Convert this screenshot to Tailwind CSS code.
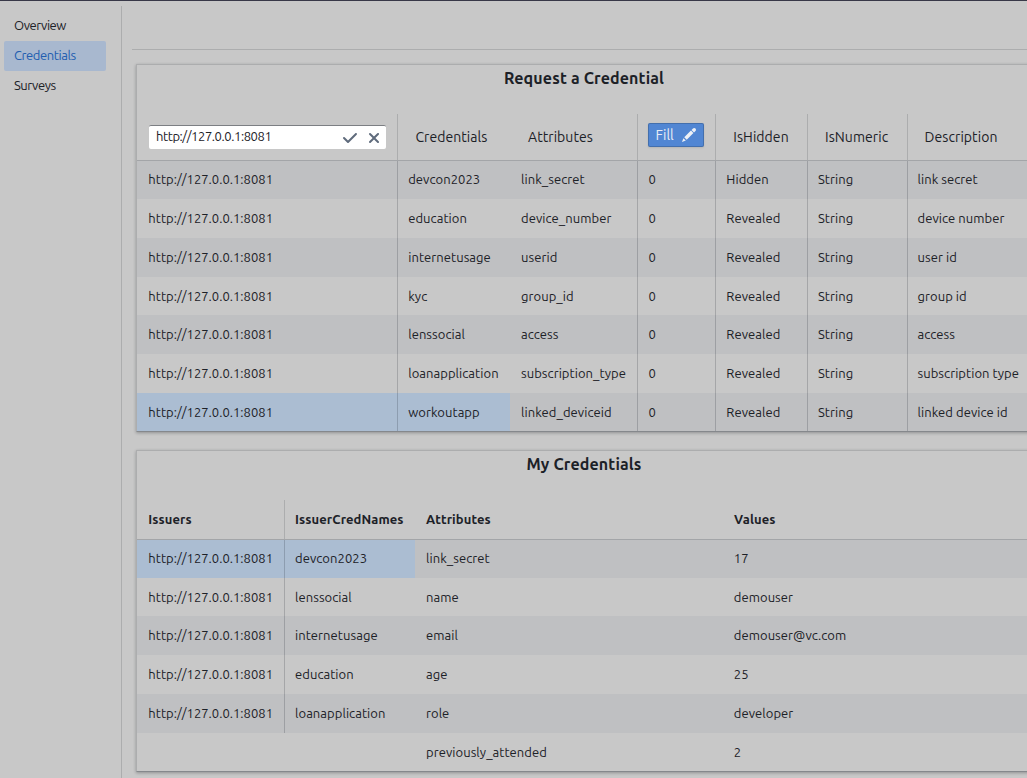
<!DOCTYPE html>
<html lang="en">
<head>
<meta charset="utf-8">
<title>Credentials</title>
<script src="https://cdn.jsdelivr.net/npm/@tailwindcss/browser@4"></script>
</head>
<body class="h-[778px] w-[1027px] overflow-hidden bg-[#c8c8c8] font-['Ubuntu','Noto_Sans',sans-serif] text-[13px] text-[#1c2127]">
<div class="flex h-full flex-col border-t border-[#383848]">
  <div class="flex min-h-0 flex-1">
    <nav class="flex w-[121px] shrink-0 flex-col pl-1 pt-[10px] tracking-[-0.45px]">
      <a class="flex h-[30px] w-[102px] items-center rounded-[2px] pl-[10px]"><span>Overview</span></a>
      <a class="flex h-[30px] w-[102px] items-center rounded-[2px] bg-[#a8b8cf] pl-[10px] tracking-[-0.4px] text-[#215db0]"><span>Credentials</span></a>
      <a class="flex h-[30px] w-[102px] items-center rounded-[2px] pl-[10px]"><span>Surveys</span></a>
    </nav>
    <main class="mt-[5px] w-[920px] shrink-0 border-l border-[#acadae] pl-[10px]">
      <div class="h-[44px] border-b border-[#acadae]"></div>
      <section class="ml-1 mt-[14px] h-[368px] w-[897px] border border-[#acadae] border-b-[#85888c] shadow-[0_1px_3px_rgba(17,20,24,0.3)]">
        <h2 class="flex h-[49px] justify-center pr-px pt-[1px] text-[16px] leading-[24px] font-bold tracking-[0.15px]"><span>Request a Credential</span></h2>
        <div class="flex h-[47px] border-b border-[#a3a5a8] text-[14px] tracking-[0.06px]">
          <div class="flex w-[261px] shrink-0 border-r border-[#acadae] pl-[12px] pt-[11px]">
            <div class="flex h-[24px] w-[237px] items-center rounded-[2px] border-t border-[#7c7f83] bg-white pl-[7px] pr-[4px] text-[13px] tracking-[-0.42px]">
              <span class="pb-[2px]">http://127.0.0.1:8081</span>
              <svg class="ml-auto size-4" viewBox="0 0 16 16" fill="#5f6b7c"><path d="M14 3c-.28 0-.53.11-.71.29L6 10.59l-3.29-3.3a1.003 1.003 0 00-1.42 1.42l4 4c.18.18.43.29.71.29s.53-.11.71-.29l8-8A1.003 1.003 0 0014 3z"/></svg>
              <svg class="ml-2 size-4" viewBox="0 0 16 16" fill="#5f6b7c"><path d="M9.41 8l3.29-3.29c.19-.18.3-.43.3-.71a1.003 1.003 0 00-1.71-.71L8 6.59l-3.29-3.3a1.003 1.003 0 00-1.42 1.42L6.59 8 3.3 11.29c-.19.18-.3.43-.3.71a1.003 1.003 0 001.71.71L8 9.41l3.29 3.29c.18.19.43.3.71.3a1.003 1.003 0 00.71-1.71L9.41 8z"/></svg>
            </div>
          </div>
          <div class="flex w-[112px] shrink-0 items-center pl-[17.4px]"><span>Credentials</span></div>
          <div class="flex w-[128px] shrink-0 items-center border-r border-[#acadae] pl-[18px]"><span>Attributes</span></div>
          <div class="flex w-[78px] shrink-0 border-r border-[#acadae] pl-[10px] pt-[9px]">
            <button class="flex h-[24px] w-[56px] items-center rounded-[2px] bg-[#5186d3] pl-[7.5px] text-[14px] text-[#e8edf5] shadow-[inset_0_0_0_1px_rgba(17,20,24,0.2),0_1px_2px_rgba(17,20,24,0.1)]"><span>Fill</span>
              <svg class="ml-auto mr-[7px] size-4" viewBox="0 0 16 16" fill="#eef1f6"><path d="M3.25 10.26l2.47 2.47 6.69-6.69-2.46-2.48-6.7 6.7zM.99 14.99l3.86-1.39-2.46-2.44L.99 15zm12.25-14c-.48 0-.92.2-1.24.51l-1.44 1.44 2.47 2.47 1.44-1.44c.32-.32.51-.75.51-1.24.01-.95-.77-1.74-1.74-1.74z"/></svg>
            </button>
          </div>
          <div class="flex w-[92px] shrink-0 items-center border-r border-[#acadae] pl-[17.3px]"><span>IsHidden</span></div>
          <div class="flex w-[100px] shrink-0 items-center border-r border-[#acadae] pl-[17px]"><span>IsNumeric</span></div>
          <div class="flex w-[124px] shrink-0 items-center pl-[16.6px]"><span>Description</span></div>
        </div>
        <div id="request" class="flex h-[270px] flex-col leading-5 tracking-[0.06px]"></div>
      </section>
      <section class="ml-1 mt-[18px] h-[322px] w-[897px] border border-[#acadae] border-b-[#85888c] shadow-[0_1px_3px_rgba(17,20,24,0.3)]">
        <h2 class="flex h-[49px] justify-center pr-px pt-[1px] text-[16px] leading-[24px] font-bold tracking-[0.15px]"><span>My Credentials</span></h2>
        <div class="flex h-[40px] border-b border-[#a3a5a8] font-bold tracking-[0.1px]">
          <div class="flex w-[148px] shrink-0 items-center border-r border-[#acadae] pl-[11.3px]"><span>Issuers</span></div>
          <div class="flex w-[130px] shrink-0 items-center pl-[10px]"><span>IssuerCredNames</span></div>
          <div class="flex w-[308px] shrink-0 items-center pl-[11px]"><span>Attributes</span></div>
          <div class="flex flex-1 items-center pl-[11px]"><span>Values</span></div>
        </div>
        <div id="mine" class="flex h-[231px] flex-col leading-5 tracking-[0.06px]"></div>
      </section>
    </main>
  </div>
</div>
<script>
const url = 'http://127.0.0.1:8081';
const request = [
  [url, 'devcon2023', 'link_secret', '0', 'Hidden', 'String', 'link secret'],
  [url, 'education', 'device_number', '0', 'Revealed', 'String', 'device number'],
  [url, 'internetusage', 'userid', '0', 'Revealed', 'String', 'user id'],
  [url, 'kyc', 'group_id', '0', 'Revealed', 'String', 'group id'],
  [url, 'lenssocial', 'access', '0', 'Revealed', 'String', 'access'],
  [url, 'loanapplication', 'subscription_type', '0', 'Revealed', 'String', 'subscription type'],
  [url, 'workoutapp', 'linked_deviceid', '0', 'Revealed', 'String', 'linked device id'],
];
const mine = [
  [url, 'devcon2023', 'link_secret', '17'],
  [url, 'lenssocial', 'name', 'demouser'],
  [url, 'internetusage', 'email', 'demouser@vc.com'],
  [url, 'education', 'age', '25'],
  [url, 'loanapplication', 'role', 'developer'],
  ['', '', 'previously_attended', '2'],
];
const requestCols = [
  'w-[261px] border-r border-[#17202a]/20 pl-[11.3px] tracking-[0.03px]',
  'w-[112px] pl-[10.2px]',
  'w-[128px] border-r border-[#17202a]/20 pl-[11px]',
  'w-[78px] border-r border-[#17202a]/20 pl-[10.5px]',
  'w-[92px] border-r border-[#17202a]/20 pl-[10.3px]',
  'w-[100px] border-r border-[#17202a]/20 pl-[10px]',
  'w-[124px] pl-[9.5px]',
];
const mineCols = [
  'w-[148px] border-r border-[#17202a]/20 pl-[11.3px] tracking-[0.03px]',
  'w-[130px] pl-[10px]',
  'w-[308px] pl-[11px]',
  'w-[309px] pl-[10.8px]',
];
const S = 'h-[38px]', L = 'h-[39px]';
const requestHeights = [S, L, L, S, L, L, S];
const mineHeights = [S, S, L, L, L, S];
function fill(id, rows, cols, heights, selected) {
  document.getElementById(id).innerHTML = rows.map((row, r) =>
    `<div class="flex shrink-0 ${heights[r]} ${r % 2 ? '' : 'bg-[#bfc0c2]'}">` + row.map((t, c) => {
      const sel = r === selected && c < 2 ? 'bg-[#abbdd2]' : '';
      const cls = row[0] === '' ? cols[c].replace('border-[#17202a]/20', 'border-transparent') : cols[c];
      return `<div class="shrink-0 whitespace-nowrap ${r ? 'pt-[9px]' : 'pt-[8px]'} ${cls} ${sel}"><span>${t}</span></div>`;
    }).join('') + '</div>').join('');
}
fill('request', request, requestCols, requestHeights, 6);
fill('mine', mine, mineCols, mineHeights, 0);
</script>
</body>
</html>
